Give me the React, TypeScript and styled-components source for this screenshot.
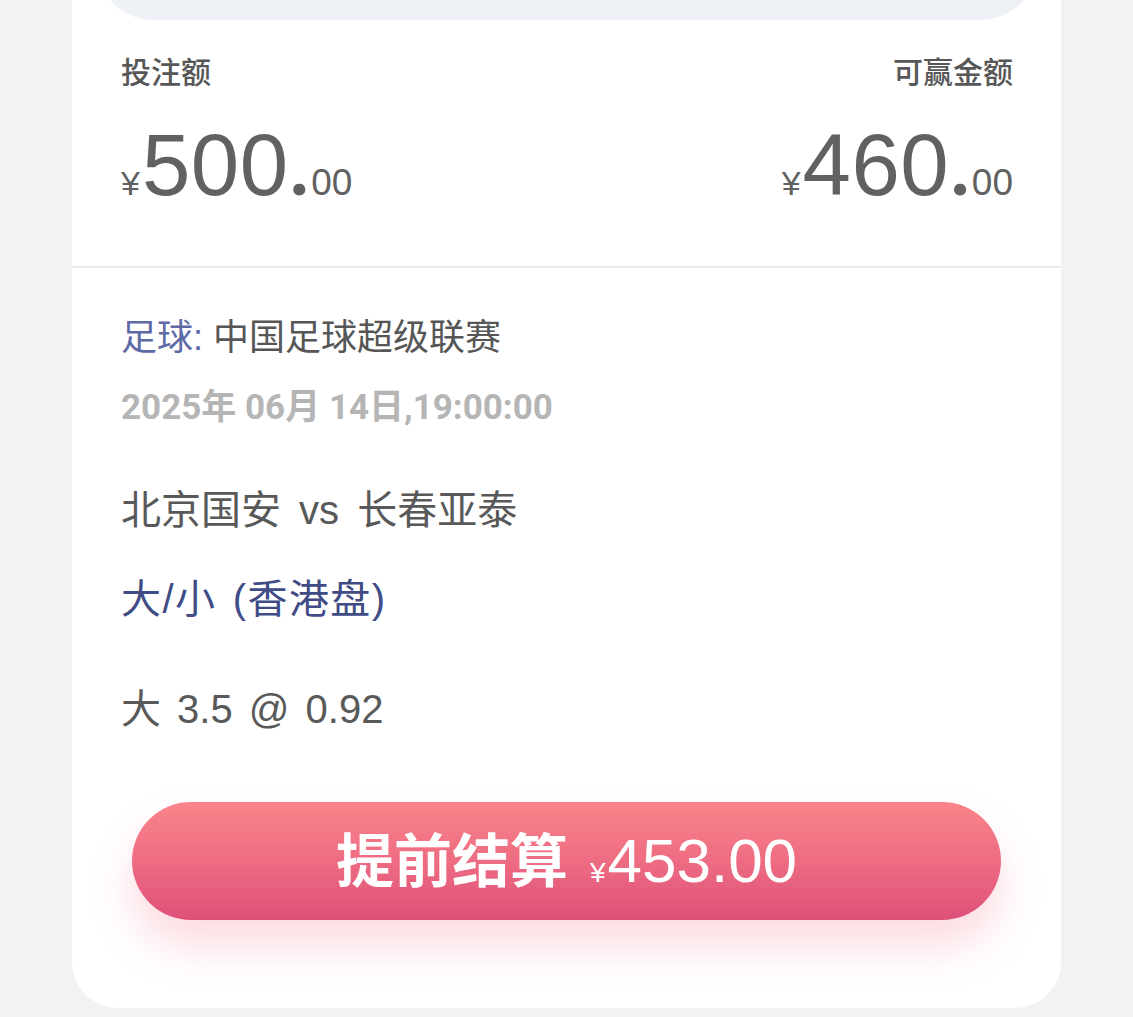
import React from "react";
import styled, { createGlobalStyle } from "styled-components";

const GlobalStyle = createGlobalStyle`
  html, body {
    margin: 0;
    padding: 0;
    background: #f2f2f2;
    overflow: hidden;
  }
  body {
    font-family: "Liberation Sans", "Noto Sans CJK SC", sans-serif;
  }
`;

const FONT = `"Liberation Sans", "Noto Sans CJK SC", sans-serif`;

const Page = styled.div`
  width: 1133px;
  height: 1017px;
  box-sizing: border-box;
  padding: 0 72px;
  background: #f2f2f2;
  overflow: hidden;
  display: flex;
  flex-direction: column;
`;

const SummaryCard = styled.section`
  background: #ffffff;
  display: flex;
  flex-direction: column;
  padding: 0 48px 40px 49px;
`;

const HeaderCap = styled.div`
  height: 70px;
  margin: -50px -24px 0 -24px;
  background: #eef1f6;
  border-radius: 0 0 56px 56px;
`;

const LabelRow = styled.div`
  display: flex;
  justify-content: space-between;
  margin-top: 33px;
`;

const Label = styled.span`
  font-family: ${FONT};
  font-size: 30px;
  line-height: 40px;
  font-weight: 500;
  color: #575757;
`;

const AmountRow = styled.div`
  display: flex;
  justify-content: space-between;
  margin-top: 29px;
`;

const Amount = styled.div`
  display: flex;
  align-items: baseline;
  color: #616161;
  font-family: ${FONT};
  line-height: 86px;
`;

const Currency = styled.span`
  font-size: 34px;
  margin-right: 2px;
`;

const Whole = styled.span`
  font-size: 87px;
  letter-spacing: 0.5px;
`;

const Dot = styled.span`
  font-family: "Lato", sans-serif;
  font-size: 74px;
  font-weight: 900;
  margin: 0 3px 0 2px;
`;

const Cents = styled.span`
  font-size: 37px;
`;

const Divider = styled.div`
  height: 2px;
  background: #ececec;
`;

const DetailCard = styled.section`
  flex: 1;
  background: #ffffff;
  border-radius: 0 0 46px 46px;
  margin-bottom: 9px;
  display: flex;
  flex-direction: column;
  padding: 46px 49px 0 49px;
`;

const LeagueLine = styled.div`
  font-family: ${FONT};
  font-size: 36px;
  line-height: 48px;
  color: #565656;
`;

const Sport = styled.span`
  color: #5d6aa6;
`;

const DateLine = styled.div`
  font-family: "Roboto", "Noto Sans CJK SC", sans-serif;
  font-size: 35px;
  font-weight: 700;
  line-height: 48px;
  color: #b5b5b5;
  margin-top: 22px;
`;

const MatchLine = styled.div`
  font-family: ${FONT};
  font-size: 40px;
  line-height: 52px;
  color: #595959;
  margin-top: 52px;
  word-spacing: 7px;
`;

const MarketLine = styled.div`
  font-family: ${FONT};
  font-size: 40px;
  line-height: 52px;
  color: #3f4c86;
  margin-top: 37px;
  word-spacing: 4px;
  letter-spacing: 1.4px;
`;

const PickLine = styled.div`
  font-family: ${FONT};
  font-size: 40px;
  line-height: 52px;
  color: #595959;
  margin-top: 58px;
  word-spacing: 5px;
`;

const CashoutButton = styled.button`
  margin: 67px 11px 0 11px;
  height: 118px;
  border: none;
  border-radius: 59px;
  background: linear-gradient(180deg, #fa848b 0%, #ee6c82 50%, #de5079 100%);
  box-shadow: 0 26px 44px rgba(240, 90, 120, 0.22);
  color: #ffffff;
  display: flex;
  align-items: baseline;
  justify-content: center;
  padding: 0;
  font-family: ${FONT};
  line-height: 118px;
  cursor: pointer;
`;

const ButtonLabel = styled.span`
  font-size: 58px;
  font-weight: 700;
  margin-right: 22px;
`;

const ButtonCurrency = styled.span`
  font-size: 28px;
  margin-right: 2px;
`;

const ButtonValue = styled.span`
  font-size: 62px;
`;

function Money({ whole, cents }: { whole: string; cents: string }) {
  return (
    <Amount>
      <Currency>¥</Currency>
      <Whole>{whole}</Whole>
      <Dot>.</Dot>
      <Cents>{cents}</Cents>
    </Amount>
  );
}

export default function App() {
  return (
    <>
      <GlobalStyle />
      <Page>
        <SummaryCard>
          <HeaderCap />
          <LabelRow>
            <Label>投注额</Label>
            <Label>可赢金额</Label>
          </LabelRow>
          <AmountRow>
            <Money whole="500" cents="00" />
            <Money whole="460" cents="00" />
          </AmountRow>
        </SummaryCard>
        <Divider />
        <DetailCard>
          <LeagueLine>
            <Sport>足球:</Sport> 中国足球超级联赛
          </LeagueLine>
          <DateLine>2025年 06月 14日,19:00:00</DateLine>
          <MatchLine>北京国安 vs 长春亚泰</MatchLine>
          <MarketLine>大/小 (香港盘)</MarketLine>
          <PickLine>大 3.5 @ 0.92</PickLine>
          <CashoutButton type="button">
            <ButtonLabel>提前结算</ButtonLabel>
            <ButtonCurrency>¥</ButtonCurrency>
            <ButtonValue>453.00</ButtonValue>
          </CashoutButton>
        </DetailCard>
      </Page>
    </>
  );
}
